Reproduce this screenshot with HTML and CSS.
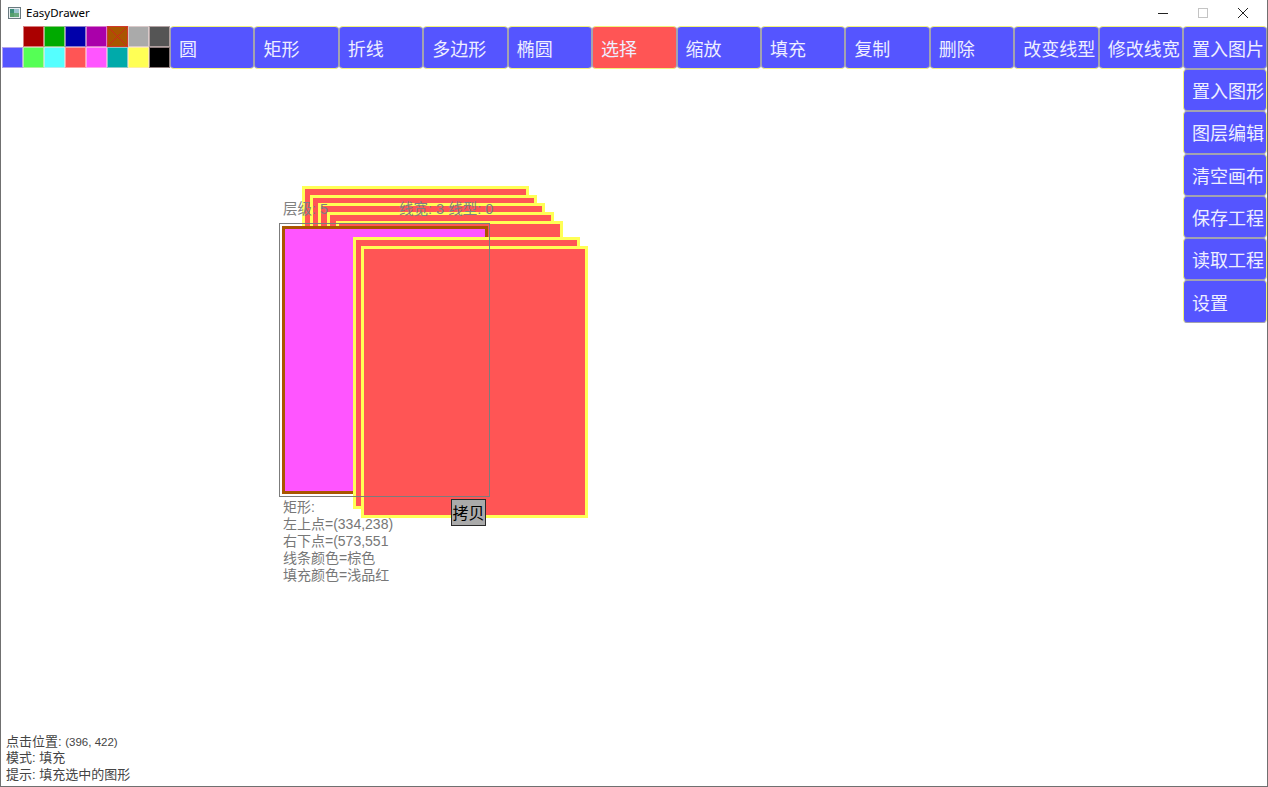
FILE: index.html
```html
<!DOCTYPE html>
<html lang="zh-CN">
<head>
<meta charset="utf-8">
<title>EasyDrawer</title>
<link rel="stylesheet" href="styles.css">
</head>
<body>
<div class="window">
  <div class="titlebar">
    <svg class="app-icon" width="13" height="12" viewBox="0 0 13 12">
      <rect x="0.5" y="0.5" width="12" height="11" fill="#e8eef0" stroke="#6a7a80"/>
      <rect x="2" y="2" width="4" height="8" fill="#3d8f7a"/>
      <rect x="6" y="2" width="5" height="8" fill="#9cc4d0"/>
      <rect x="2" y="6" width="9" height="4" fill="#5aa36a" opacity="0.8"/>
    </svg>
    <span class="title">EasyDrawer</span>
    <div class="controls">
      <svg class="ctl" width="46" height="26" viewBox="0 0 46 26"><line x1="18" y1="13.5" x2="28" y2="13.5" stroke="#222" stroke-width="1"/></svg>
      <svg class="ctl" width="46" height="26" viewBox="0 0 46 26"><rect x="18.5" y="8.5" width="9" height="9" fill="none" stroke="#c4c4c4" stroke-width="1"/></svg>
      <svg class="ctl" width="46" height="26" viewBox="0 0 46 26"><path d="M18 8 L28 18 M28 8 L18 18" stroke="#222" stroke-width="1"/></svg>
    </div>
  </div>
  <div class="main">
    <div class="left">
      <div class="toolbar">
        <div class="palette">
          <div class="cell empty"></div>
          <div class="cell" style="background:#AA0000"></div>
          <div class="cell" style="background:#00AA00"></div>
          <div class="cell" style="background:#0000AA"></div>
          <div class="cell" style="background:#AA00AA"></div>
          <div class="cell picked" style="background:#AA5500">
            <svg width="21" height="21" viewBox="0 0 21 21"><path d="M1 1 L20 20 M20 1 L1 20" stroke="#cc2a1a" stroke-width="1"/></svg>
          </div>
          <div class="cell" style="background:#AAAAAA"></div>
          <div class="cell" style="background:#555555"></div>
          <div class="cell" style="background:#5555FF"></div>
          <div class="cell" style="background:#55FF55"></div>
          <div class="cell" style="background:#55FFFF"></div>
          <div class="cell" style="background:#FF5555"></div>
          <div class="cell" style="background:#FF55FF"></div>
          <div class="cell" style="background:#00AAAA"></div>
          <div class="cell" style="background:#FFFF55"></div>
          <div class="cell" style="background:#000000"></div>
        </div>
        <div class="btn">圆</div>
        <div class="btn">矩形</div>
        <div class="btn">折线</div>
        <div class="btn">多边形</div>
        <div class="btn">椭圆</div>
        <div class="btn active">选择</div>
        <div class="btn">缩放</div>
        <div class="btn">填充</div>
        <div class="btn">复制</div>
        <div class="btn">删除</div>
        <div class="btn">改变线型</div>
        <div class="btn">修改线宽</div>
      </div>
      <div class="canvas">
        <div class="shape rect-red" style="left:301px;top:117px"></div>
        <div class="shape rect-red" style="left:309px;top:126px"></div>
        <div class="shape rect-red" style="left:317px;top:134px"></div>
        <div class="shape rect-red" style="left:326px;top:143px"></div>
        <div class="shape rect-red" style="left:335px;top:152px"></div>
        <div class="shape rect-pink" style="left:281px;top:157px"></div>
        <div class="shape rect-red" style="left:352px;top:168px"></div>
        <div class="shape rect-red" style="left:360px;top:177px"></div>
        <div class="shape selection" style="left:278px;top:154px"></div>
        <div class="shape label" style="left:282px;top:132px">层级: 5</div>
        <div class="shape label" style="left:398px;top:132px">线宽: 3 线型: 0</div>
        <div class="shape info" style="left:282px;top:430px">
          <div>矩形:</div>
          <div>左上点=(334,238)</div>
          <div>右下点=(573,551</div>
          <div>线条颜色=棕色</div>
          <div>填充颜色=浅品红</div>
        </div>
        <div class="shape copy-btn" style="left:450px;top:430px">拷贝</div>
        <div class="status">
          <div>点击位置: <span class="coord">(396, 422)</span></div>
          <div>模式: 填充</div>
          <div>提示: 填充选中的图形</div>
        </div>
      </div>
    </div>
    <div class="sidebar">
      <div class="btn side first">置入图片</div>
      <div class="btn side">置入图形</div>
      <div class="btn side">图层编辑</div>
      <div class="btn side">清空画布</div>
      <div class="btn side">保存工程</div>
      <div class="btn side">读取工程</div>
      <div class="btn side">设置</div>
    </div>
  </div>
</div>
</body>
</html>
```

FILE: styles.css
```css
* { box-sizing: border-box; }
html, body { margin: 0; padding: 0; background: #ffffff; }
body { width: 1268px; height: 787px; overflow: hidden; font-family: "Noto Sans CJK SC", "Noto Sans", sans-serif; }

.window {
  width: 1268px;
  height: 787px;
  border-left: 1px solid #707070;
  border-right: 1px solid #707070;
  border-bottom: 1px solid #707070;
  display: flex;
  flex-direction: column;
  background: #fff;
}

.titlebar {
  height: 26px;
  display: flex;
  align-items: center;
  flex-shrink: 0;
}
.app-icon { margin-left: 7px; margin-top: -1px; }
.title {
  margin-left: 5px;
  font-family: "Noto Sans", "Open Sans", sans-serif;
  font-size: 11.5px;
  color: #000;
  margin-top: -2px;
}
.controls { margin-left: auto; display: flex; margin-right: 1px; margin-top: -1px; }
.ctl { display: block; margin-left: -6px; }
.ctl:first-child { margin-left: 0; }

.main { flex: 1; display: flex; min-height: 0; }
.left { flex: 1; display: flex; flex-direction: column; min-width: 0; }

.toolbar { display: flex; height: 43px; flex-shrink: 0; }
.palette {
  margin-left: 1px;
  width: 168px;
  height: 42px;
  display: grid;
  grid-template-columns: repeat(8, 21px);
  grid-template-rows: repeat(2, 21px);
}
.cell {
  width: 21px;
  height: 21px;
  box-shadow: inset 0 0 0 1px rgba(255, 225, 225, 0.55);
}
.cell.empty { background: #fff; box-shadow: none; }
.cell.picked { box-shadow: inset 0 0 0 1px #d23a2a; }
.cell svg { display: block; }

.btn {
  flex: 1;
  height: 43px;
  background: #5555FF;
  border: 1px solid;
  border-color: #f2f27a #a2a2b0 #f2f27a #a2a2b0;
  border-radius: 4px;
  color: #eeeeff;
  font-size: 18px;
  line-height: 1;
  display: flex;
  align-items: center;
  padding-left: 8px;
  white-space: nowrap;
  overflow: hidden;
  letter-spacing: 0;
}
.btn.active { background: #FF5555; }

.sidebar { width: 84px; display: flex; flex-direction: column; flex-shrink: 0; }
.btn.side {
  flex: none;
  height: 42.3px;
  border-color: #a2a2b0 #f2f27a #a2a2b0 #f2f27a;
}
.btn.side.first {
  height: 43px;
  border-color: #f2f27a #a2a2b0 #a2a2b0 #a2a2b0;
}

.canvas {
  flex: 1;
  position: relative;
  display: flex;
  flex-direction: column;
  justify-content: flex-end;
}

.shape { position: absolute; }
.rect-red {
  width: 227px;
  height: 272px;
  background: #FF5555;
  border: 3px solid #FFFF55;
}
.rect-pink {
  width: 206px;
  height: 268px;
  background: #FF55FF;
  border: 3px solid #AA5500;
}
.selection {
  width: 211px;
  height: 274px;
  border: 1px solid #7c7c7c;
}
.label {
  font-family: "Liberation Sans", "Noto Sans CJK SC", sans-serif;
  font-size: 14.5px;
  line-height: 17px;
  color: #808080;
  white-space: nowrap;
}
.info {
  font-family: "Liberation Sans", "Noto Sans CJK SC", sans-serif;
  font-size: 14px;
  line-height: 17px;
  color: #777777;
  white-space: nowrap;
}
.copy-btn {
  width: 35px;
  height: 27px;
  background: #AAAAAA;
  border: 1px solid #2a2a2a;
  color: #000;
  font-size: 16px;
  line-height: 25px;
  text-align: center;
}

.status {
  padding-left: 5px;
  padding-bottom: 3px;
  font-family: "Liberation Sans", "Noto Sans CJK SC", sans-serif;
  font-size: 13px;
  line-height: 16.5px;
  color: #444444;
}
.coord { font-size: 11.5px; }
```
